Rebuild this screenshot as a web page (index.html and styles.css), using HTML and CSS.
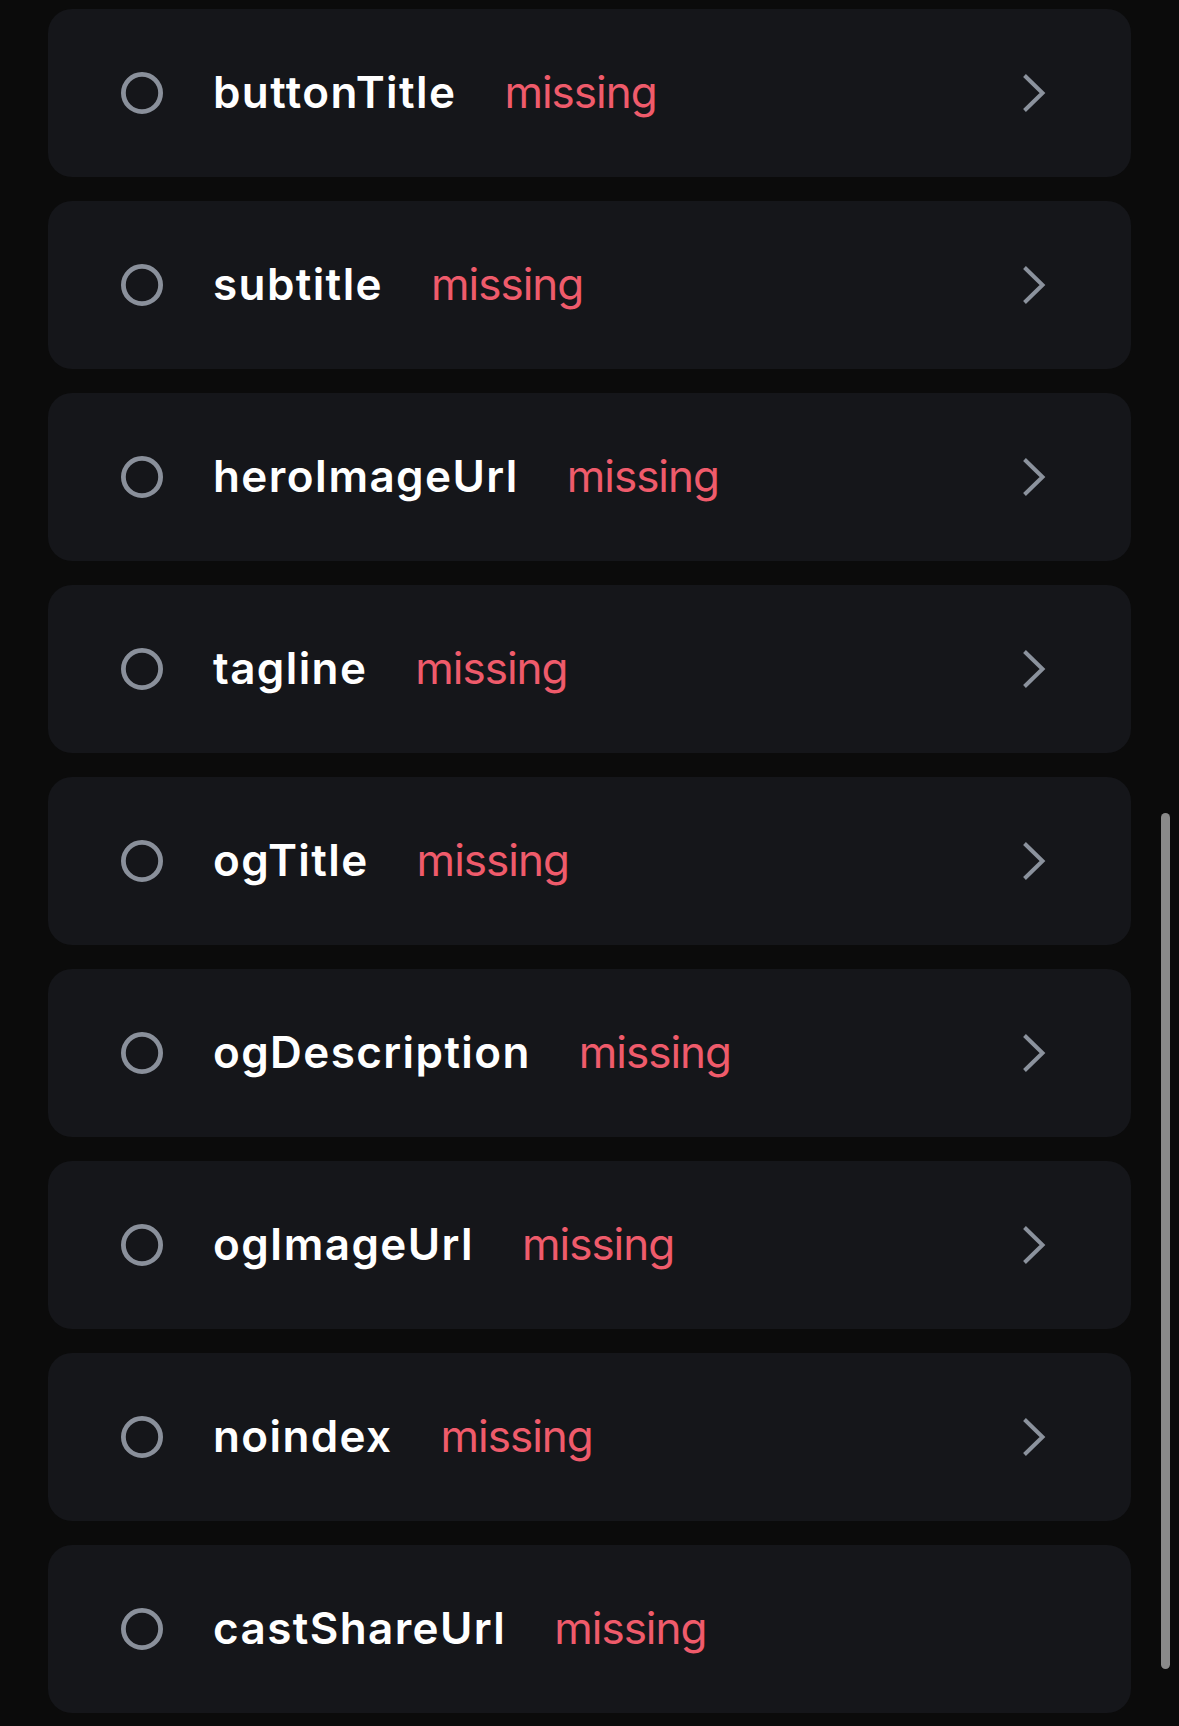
FILE: index.html
```html
<!DOCTYPE html>
<html lang="en">
<head>
<meta charset="utf-8">
<title>Fields</title>
<link rel="stylesheet" href="styles.css">
</head>
<body>
<main class="list">
  <div class="card"><svg class="dot" viewBox="0 0 42 42"><circle cx="21" cy="21" r="18.6"/></svg><span class="name">buttonTitle</span><span class="status">missing</span><svg class="chev" viewBox="0 0 24 40"><path d="M2.5 2.5 L20.5 20 L2.5 37.5"/></svg></div>
  <div class="card"><svg class="dot" viewBox="0 0 42 42"><circle cx="21" cy="21" r="18.6"/></svg><span class="name">subtitle</span><span class="status">missing</span><svg class="chev" viewBox="0 0 24 40"><path d="M2.5 2.5 L20.5 20 L2.5 37.5"/></svg></div>
  <div class="card"><svg class="dot" viewBox="0 0 42 42"><circle cx="21" cy="21" r="18.6"/></svg><span class="name">heroImageUrl</span><span class="status">missing</span><svg class="chev" viewBox="0 0 24 40"><path d="M2.5 2.5 L20.5 20 L2.5 37.5"/></svg></div>
  <div class="card"><svg class="dot" viewBox="0 0 42 42"><circle cx="21" cy="21" r="18.6"/></svg><span class="name">tagline</span><span class="status">missing</span><svg class="chev" viewBox="0 0 24 40"><path d="M2.5 2.5 L20.5 20 L2.5 37.5"/></svg></div>
  <div class="card"><svg class="dot" viewBox="0 0 42 42"><circle cx="21" cy="21" r="18.6"/></svg><span class="name">ogTitle</span><span class="status">missing</span><svg class="chev" viewBox="0 0 24 40"><path d="M2.5 2.5 L20.5 20 L2.5 37.5"/></svg></div>
  <div class="card"><svg class="dot" viewBox="0 0 42 42"><circle cx="21" cy="21" r="18.6"/></svg><span class="name">ogDescription</span><span class="status">missing</span><svg class="chev" viewBox="0 0 24 40"><path d="M2.5 2.5 L20.5 20 L2.5 37.5"/></svg></div>
  <div class="card"><svg class="dot" viewBox="0 0 42 42"><circle cx="21" cy="21" r="18.6"/></svg><span class="name">ogImageUrl</span><span class="status">missing</span><svg class="chev" viewBox="0 0 24 40"><path d="M2.5 2.5 L20.5 20 L2.5 37.5"/></svg></div>
  <div class="card"><svg class="dot" viewBox="0 0 42 42"><circle cx="21" cy="21" r="18.6"/></svg><span class="name">noindex</span><span class="status">missing</span><svg class="chev" viewBox="0 0 24 40"><path d="M2.5 2.5 L20.5 20 L2.5 37.5"/></svg></div>
  <div class="card"><svg class="dot" viewBox="0 0 42 42"><circle cx="21" cy="21" r="18.6"/></svg><span class="name">castShareUrl</span><span class="status">missing</span></div>
</main>
<div class="scrollbar"></div>
</body>
</html>
```
FILE: styles.css
```css
html, body {
  margin: 0;
  padding: 0;
  background: #0b0b0b;
  height: 100%;
  overflow: hidden;
}
body {
  font-family: Inter, "Noto Sans", "Liberation Sans", sans-serif;
}
.list {
  display: flex;
  flex-direction: column;
  gap: 24px;
  padding: 9px 48px 0 48px;
}
.card {
  display: flex;
  align-items: center;
  height: 168px;
  box-sizing: border-box;
  padding: 0 85px 0 73px;
  background: #15161a;
  border-radius: 24px;
}
.dot {
  width: 42px;
  height: 42px;
  flex: none;
}
.dot circle {
  fill: none;
  stroke: #8a909b;
  stroke-width: 4.8;
}
.name {
  margin-left: 50px;
  margin-top: -2px;
  font-size: 44px;
  font-weight: 600;
  color: #ffffff;
  letter-spacing: 1.4px;
}
.status {
  margin-left: 48px;
  margin-top: -2px;
  font-size: 44px;
  font-weight: 400;
  color: #ef5b6b;
  letter-spacing: -1px;
}
.chev {
  margin-left: auto;
  width: 24px;
  height: 40px;
  flex: none;
}
.chev path {
  fill: none;
  stroke: #8b929d;
  stroke-width: 4;
  stroke-linecap: butt;
  stroke-linejoin: miter;
}
.scrollbar {
  position: fixed;
  left: 1161px;
  top: 813px;
  width: 9px;
  height: 856px;
  border-radius: 5px;
  background: #8a8a8a;
}
```
